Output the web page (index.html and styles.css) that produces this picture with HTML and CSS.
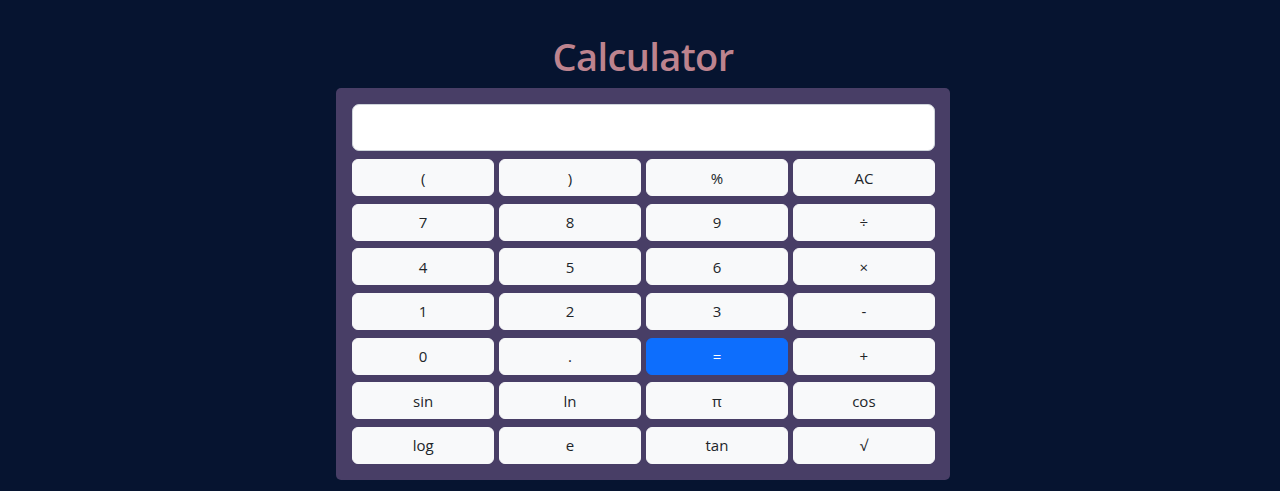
FILE: index.html
```html
<!DOCTYPE html>
<html lang="en">
<head>
<meta charset="utf-8">
<title>Calculator</title>
<link rel="stylesheet" href="styles.css">
</head>
<body>
<main class="page">
  <h1 class="title">Calculator</h1>
  <section class="calc">
    <input class="display" type="text" readonly>
    <div class="keys">
      <button class="key">(</button>
      <button class="key">)</button>
      <button class="key">%</button>
      <button class="key">AC</button>
      <button class="key">7</button>
      <button class="key">8</button>
      <button class="key">9</button>
      <button class="key">÷</button>
      <button class="key">4</button>
      <button class="key">5</button>
      <button class="key">6</button>
      <button class="key">×</button>
      <button class="key">1</button>
      <button class="key">2</button>
      <button class="key">3</button>
      <button class="key">-</button>
      <button class="key">0</button>
      <button class="key">.</button>
      <button class="key key-primary">=</button>
      <button class="key">+</button>
      <button class="key">sin</button>
      <button class="key">ln</button>
      <button class="key">π</button>
      <button class="key">cos</button>
      <button class="key">log</button>
      <button class="key">e</button>
      <button class="key">tan</button>
      <button class="key">√</button>
    </div>
  </section>
</main>
</body>
</html>
```

FILE: styles.css
```css
* { box-sizing: border-box; }
html, body {
  margin: 0;
  background: #061430;
  font-family: "Open Sans", "Noto Sans", sans-serif;
  color: #212529;
}
.page {
  display: flex;
  flex-direction: column;
  align-items: center;
  padding-top: 32px;
  padding-left: 6px;
}
.title {
  margin: 0 0 8px;
  font-size: 38px;
  line-height: 48px;
  font-weight: 600;
  color: #bd838e;
  letter-spacing: -0.6px;
}
.calc {
  width: 614px;
  background: #483e66;
  border-radius: 5px;
  padding: 16px 15px 16px 16px;
  display: flex;
  flex-direction: column;
  gap: 8px;
}
.display {
  height: 47px;
  width: 100%;
  border: 1px solid #ced4da;
  border-radius: 7px;
  background: #fff;
  font: inherit;
  font-size: 20px;
  padding: 6px 12px;
}
.keys {
  display: grid;
  grid-template-columns: repeat(4, 1fr);
  column-gap: 4.67px;
  row-gap: 7.67px;
}
.key {
  height: 37px;
  border: 1px solid #f8f9fa;
  border-radius: 6px;
  background: #f8f9fa;
  color: #212529;
  font-family: inherit;
  font-size: 15px;
  padding: 0 12px;
}
.key-primary {
  background: #0d6efd;
  border-color: #0d6efd;
  color: #fff;
}
```
